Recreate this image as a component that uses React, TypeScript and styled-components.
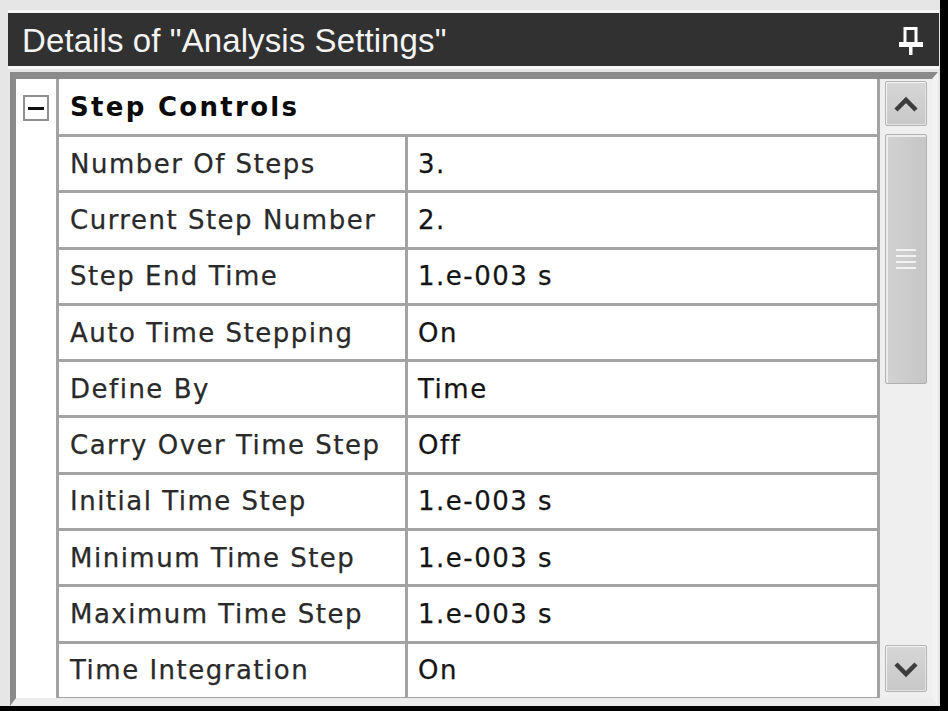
import React from 'react';
import styled, { createGlobalStyle } from 'styled-components';

const rows: [string, string][] = [
  ['Number Of Steps', '3.'],
  ['Current Step Number', '2.'],
  ['Step End Time', '1.e-003 s'],
  ['Auto Time Stepping', 'On'],
  ['Define By', 'Time'],
  ['Carry Over Time Step', 'Off'],
  ['Initial Time Step', '1.e-003 s'],
  ['Minimum Time Step', '1.e-003 s'],
  ['Maximum Time Step', '1.e-003 s'],
  ['Time Integration', 'On'],
];

function App() {
  return (
    <>
      <GlobalStyle />
      <Window>
        <TitleBar>
          <Title>Details of "Analysis Settings"</Title>
          <PinIcon viewBox="0 0 24 28" width={24} height={28}>
            <rect x="6" y="1.5" width="11" height="15" fill="none" stroke="#fff" strokeWidth="3" />
            <rect x="0" y="15" width="24" height="5" fill="#fff" />
            <rect x="10" y="20" width="3.5" height="8" fill="#fff" />
          </PinIcon>
        </TitleBar>
        <Frame>
          <Gutter>
            <GutterHead>
              <MinusBox>
                <Dash />
              </MinusBox>
            </GutterHead>
          </Gutter>
          <Rows>
            <HeaderRow>Step Controls</HeaderRow>
            {rows.map(([label, value]) => (
              <Row key={label}>
                <Label>{label}</Label>
                <Value>{value}</Value>
              </Row>
            ))}
          </Rows>
          <Scrollbar>
            <ScrollButton>
              <svg viewBox="0 0 28 20" width={28} height={20}>
                <polyline points="4,16 14,6 24,16" fill="none" stroke="#3c3c3c" strokeWidth="4.5" />
              </svg>
            </ScrollButton>
            <Thumb>
              <Grip />
              <Grip />
              <Grip />
              <Grip />
            </Thumb>
            <Track />
            <ScrollButton $tall>
              <svg viewBox="0 0 28 20" width={28} height={20}>
                <polyline points="4,5 14,15 24,5" fill="none" stroke="#3c3c3c" strokeWidth="4.5" />
              </svg>
            </ScrollButton>
          </Scrollbar>
        </Frame>
      </Window>
    </>
  );
}

export default App;

const GlobalStyle = createGlobalStyle`
  html, body {
    margin: 0;
    padding: 0;
    background: #000;
  }
  body {
    width: 948px;
    height: 711px;
    overflow: hidden;
  }
`;

const Window = styled.div`
  width: 940px;
  height: 706px;
  box-sizing: border-box;
  background: #e6e6e6;
  padding: 13px 1px 0 8px;
  display: flex;
  flex-direction: column;
`;

const TitleBar = styled.div`
  height: 53px;
  flex-shrink: 0;
  background: #313131;
  display: flex;
  align-items: center;
  justify-content: space-between;
  padding: 0 16px 0 14px;
  box-shadow: 0 -3px 0 #f7f7f7, 0 3px 0 #f7f7f7;
`;

const Title = styled.span`
  color: #f4f4f4;
  font-family: "Liberation Sans", Arial, sans-serif;
  font-size: 33px;
  letter-spacing: 0.1px;
  margin-top: 3px;
`;

const PinIcon = styled.svg`
  display: block;
  margin-top: 2px;
`;

const Frame = styled.div`
  flex: 1;
  min-height: 0;
  margin: 6px 1px 0 2px;
  border-style: solid;
  border-width: 7px 6px 8px 6px;
  border-color: #8a8a8a #f2f2f2 #ececec #8a8a8a;
  background: #fff;
  display: flex;
  overflow: hidden;
`;

const Gutter = styled.div`
  width: 40px;
  flex-shrink: 0;
  border-right: 3px solid #a3a3a3;
`;

const GutterHead = styled.div`
  height: 58px;
  display: flex;
  align-items: center;
  padding-left: 7px;
`;

const MinusBox = styled.div`
  width: 26px;
  height: 26px;
  box-sizing: border-box;
  border: 2px solid #8f8f8f;
  display: flex;
  align-items: center;
  justify-content: center;
`;

const Dash = styled.span`
  width: 16px;
  height: 3px;
  background: #111;
`;

const Rows = styled.div`
  flex: 1;
  border-right: 3px solid #a3a3a3;
  display: flex;
  flex-direction: column;
  overflow: hidden;
  font-family: "DejaVu Sans", Verdana, sans-serif;
  font-size: 26px;
  letter-spacing: 1.5px;
  -webkit-text-stroke: 0.25px currentColor;
`;

const HeaderRow = styled.div`
  height: 58px;
  flex-shrink: 0;
  box-sizing: border-box;
  border-bottom: 3px solid #a3a3a3;
  display: flex;
  align-items: center;
  padding-left: 11px;
  font-weight: bold;
  letter-spacing: 2.3px;
  color: #0a0a0a;
  -webkit-text-stroke: 0;
`;

const Row = styled.div`
  height: 56.3px;
  flex-shrink: 0;
  box-sizing: border-box;
  border-bottom: 3px solid #a3a3a3;
  display: grid;
  grid-template-columns: 349px 1fr;
`;

const Label = styled.div`
  box-sizing: border-box;
  border-right: 3px solid #a3a3a3;
  padding-left: 11px;
  display: flex;
  align-items: center;
  color: #2a2a2a;
  white-space: nowrap;
`;

const Value = styled.div`
  padding-left: 10px;
  display: flex;
  align-items: center;
  color: #151515;
`;

const Scrollbar = styled.div`
  width: 52px;
  flex-shrink: 0;
  box-sizing: border-box;
  background: #efefef;
  padding: 2px 5px 6px 5px;
  display: flex;
  flex-direction: column;
`;

const ScrollButton = styled.div<{ $tall?: boolean }>`
  height: ${p => (p.$tall ? 47 : 45)}px;
  flex-shrink: 0;
  box-sizing: border-box;
  border: 1px solid #b4b4b4;
  box-shadow: inset 1px 1px 0 #f4f4f4, inset -1px -1px 0 #e2e2e2;
  background: linear-gradient(#d6d6d6, #c8c8c8);
  border-radius: 2px;
  display: flex;
  align-items: center;
  justify-content: center;
`;

const Thumb = styled.div`
  height: 250px;
  flex-shrink: 0;
  margin-top: 8px;
  box-sizing: border-box;
  border: 1px solid #b0b0b0;
  box-shadow: inset 2px 2px 0 #ececec;
  background: linear-gradient(to right, #d2d2d2, #c6c6c6);
  border-radius: 2px;
  display: flex;
  flex-direction: column;
  align-items: center;
  justify-content: center;
  gap: 4px;
`;

const Grip = styled.span`
  width: 20px;
  height: 2px;
  background: #f2f2f2;
`;

const Track = styled.div`
  flex: 1;
`;
